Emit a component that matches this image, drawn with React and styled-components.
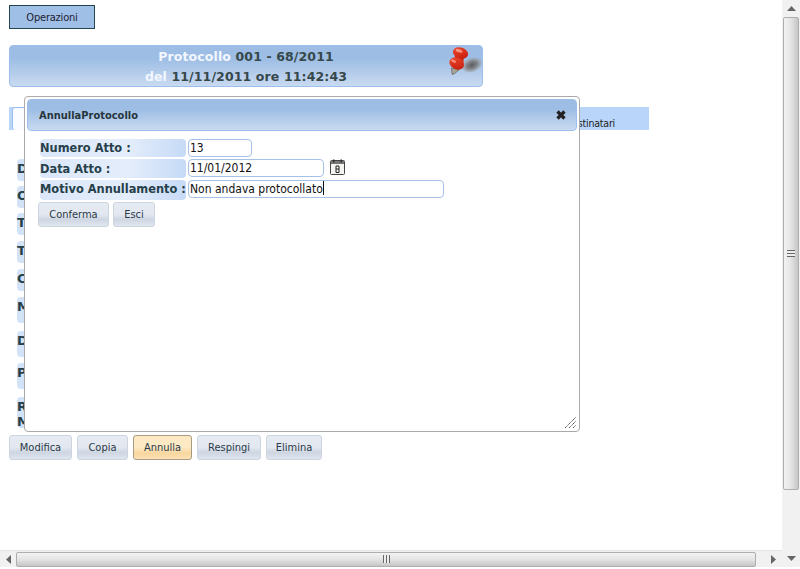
import React from 'react';
import styled, { createGlobalStyle } from 'styled-components';

const Global = createGlobalStyle`
  html, body { margin: 0; padding: 0; height: 100%; overflow: hidden; background: #fff; }
  #root { height: 569px; }
`;
const Shell = styled.div`
  width: 800px; height: 569px; display: grid;
  grid-template-columns: 782px 18px; grid-template-rows: 550px 17px 2px;
  font-family: "DejaVu Sans Condensed", "DejaVu Sans", sans-serif; font-size: 11px; color: #222;
`;
const Page = styled.main`
  position: relative; overflow: hidden; padding: 5px 0 0 9px; background: #fff;
  display: flex; flex-direction: column; align-items: flex-start;
`;
const OpsButton = styled.button`
  width: 86px; height: 24px; padding: 0; font: inherit; color: #223; letter-spacing: -0.2px;
  background: #a0bfe6; border: 1px solid #24464e; margin-bottom: 16px;
`;
const Banner = styled.header`
  position: relative; box-sizing: border-box; width: 474px; height: 42px; border: 1px solid #9cc0ec; border-radius: 4px;
  background: linear-gradient(#9dbde4 0%, #9dbde4 30%, #c9daf1 100%);
  font-family: "DejaVu Sans", sans-serif; font-weight: bold; font-size: 12.5px; letter-spacing: 0.12px; line-height: 20px; text-align: center;
  color: #36484a; padding-top: 1px; margin-bottom: 20px;
`;
const Light = styled.span` color: #f2f7ff; `;
const Pin = styled.svg` position: absolute; right: 0; top: 0; `;
const TabStrip = styled.nav`
  box-sizing: border-box; width: 640px; height: 23px; background: #b9d6fa; padding-left: 3px;
  display: flex; align-items: stretch; margin-bottom: 29px;
`;
const ActiveTab = styled.div`
  width: 60px; background: #fbfcff; border: 1px solid #9cc0ec; border-bottom: 0; border-radius: 3px 0 0 3px;
`;
const LastTab = styled.div` margin-left: auto; padding: 10px 34px 0 0; font-size: 10.5px; line-height: 12px; color: #222; letter-spacing: -0.2px; `;
const Fields = styled.div` display: flex; flex-direction: column; margin-left: 8px; `;
const SideLabel = styled.div`
  box-sizing: border-box; width: 100px; height: ${p => p.$h}px; margin-bottom: ${p => p.$gap}px;
  border-radius: 4px; padding-top: 2px; white-space: pre-line;
  background: linear-gradient(90deg, #d2e2f7, #e8f0fb);
  font: bold 13px/15px "DejaVu Sans", sans-serif; color: #26404a;
`;
const Actions = styled.div` display: flex; gap: 5px; margin-top: 7px; `;
const ActionBtn = styled.button`
  box-sizing: border-box; width: ${p => p.$w}px; height: 25px; padding: 0; font: inherit; font-size: 11px; color: #2a3a48;
  border-radius: 3px; border: 1px solid ${p => p.$active ? '#a89c84' : '#ccd5e0'};
  background: ${p => p.$active ? 'linear-gradient(#fde9c4 0%, #fde9c4 50%, #f8d69e 75%, #fce3b6 100%)' : 'linear-gradient(#e6ebf3 0%, #e2e7f0 50%, #ced6e2 72%, #e0e6ef 100%)'};
`;
const Dialog = styled.section`
  position: absolute; left: 24px; top: 96px; box-sizing: border-box; width: 556px; height: 336px;
  background: #fff; border: 1px solid #aaa; border-radius: 4px; padding: 2px;
`;
const TitleBar = styled.div`
  box-sizing: border-box; height: 32px; border: 1px solid #9cc0ec; border-radius: 4px; padding: 0 10px 0 11px;
  background: linear-gradient(#9dbde4 0%, #9dbde4 30%, #c9daf1 100%);
  display: flex; align-items: center; justify-content: space-between;
  font-size: 11px; font-weight: bold; color: #26363c;
`;
const FormGrid = styled.div`
  display: grid; grid-template-columns: 146px auto; grid-template-rows: 18px 19px 20px; column-gap: 2px; row-gap: 2px;
  justify-content: start; padding: 8px 0 0 13px;
`;
const FormLabel = styled.label`
  box-sizing: border-box; border-radius: 4px; white-space: nowrap;
  background: linear-gradient(90deg, #dbe7f9 0%, #e4edfb 60%, #c6daf6 100%);
  font: bold 11.4px/${p => p.$lh}px "DejaVu Sans", sans-serif; color: #26404a;
`;
const InputRow = styled.div` display: flex; align-items: flex-start; gap: 6px; `;
const TextBox = styled.div`
  box-sizing: border-box; width: ${p => p.$w}px; height: 18px; border: 1px solid #a5c1e6; border-radius: 4px;
  font-size: 12px; line-height: 16px; padding-left: 1px; color: #111; background: #fff; white-space: nowrap;
`;
const Caret = styled.span` display: inline-block; width: 1px; height: 14px; background: #111; vertical-align: -2px; `;
const DialogActions = styled.div` display: flex; gap: 4px; padding: 2px 0 0 11px; `;
const Grip = styled.svg` position: absolute; right: 2px; bottom: 2px; `;
const VBar = styled.aside`
  grid-row: 1 / 3; grid-column: 2; box-sizing: border-box; background: #f1f1f1; display: flex; flex-direction: column; align-items: center;
`;
const HBar = styled.aside`
  box-sizing: border-box; background: #f1f1f1; display: flex; align-items: center; border-top: 1px solid #e4e4e4;
`;
const Arrow = styled.div`
  flex: none; width: ${p => p.$size}px; height: ${p => p.$size}px; display: flex; align-items: center; justify-content: center;
`;
const Spacer = styled.div` flex: 1; `;
const VThumb = styled.div`
  box-sizing: border-box; width: 16px; height: 473px; margin-right: 1px; flex: none;
  border: 1px solid #aeaeae; border-radius: 2px; background: linear-gradient(90deg, #f2f2f2 0%, #e6e6e6 45%, #c6c6c6 100%);
  display: flex; align-items: center; justify-content: center;
`;
const HThumb = styled.div`
  box-sizing: border-box; width: 740px; height: 15px; flex: none;
  border: 1px solid #aeaeae; border-radius: 2px; background: linear-gradient(#f2f2f2 0%, #e6e6e6 45%, #c6c6c6 100%);
  display: flex; align-items: center; justify-content: center;
`;
const GripLinesV = styled.div` width: 8px; height: 7px; background: repeating-linear-gradient(#666 0 1px, #eee 1px 3px); `;
const GripLinesH = styled.div` width: 7px; height: 8px; background: repeating-linear-gradient(90deg, #666 0 1px, #eee 1px 3px); `;

const PinIcon = () => (
  <Pin width="38" height="34" viewBox="0 0 38 34">
    <defs>
      <radialGradient id="sh"><stop offset="0" stopColor="#5a5a5a" /><stop offset="0.55" stopColor="#7c7c7c" stopOpacity=".85" /><stop offset="1" stopColor="#a4a4a4" stopOpacity=".35" /></radialGradient>
      <linearGradient id="red" x1="0" y1="0" x2="1" y2="1"><stop offset="0" stopColor="#f0492f" /><stop offset="1" stopColor="#c21a0b" /></linearGradient>
    </defs>
    <ellipse cx="28" cy="19" rx="10.5" ry="7" transform="rotate(-22 28 19)" fill="url(#sh)" />
    <path d="M8 29 L9 24 L12 26 Z" fill="#555" />
    <path d="M7.5 22 L15 24 L10 28 L8 28 Z" fill="#a6a697" stroke="#555" strokeWidth=".6" />
    <path d="M11 10 L20 9 L19 21 L9 20 Z" fill="#d2260f" />
    <ellipse cx="12.8" cy="17.5" rx="7.6" ry="5.8" transform="rotate(25 12.8 17.5)" fill="url(#red)" />
    <ellipse cx="16.5" cy="7" rx="7.7" ry="5.6" transform="rotate(18 16.5 7)" fill="url(#red)" />
    <ellipse cx="15" cy="4.8" rx="3.6" ry="1.6" transform="rotate(18 15 4.8)" fill="#f7927e" />
    <ellipse cx="9.5" cy="15" rx="2.8" ry="1.4" transform="rotate(25 9.5 15)" fill="#f58a76" />
  </Pin>
);
const CalendarIcon = () => (
  <svg width="16" height="16" viewBox="0 0 16 16">
    <rect x="0.5" y="1.5" width="14" height="14" rx="1" fill="#f4f4f0" stroke="#444" />
    <rect x="1" y="2" width="13" height="3" fill="#777" />
    <rect x="3" y="0.5" width="1.5" height="3" fill="#333" /><rect x="10.5" y="0.5" width="1.5" height="3" fill="#333" />
    <path d="M6 7 H9 V13.5 H6 Z M6 10 H9" fill="none" stroke="#222" />
  </svg>
);
const CloseIcon = () => (
  <svg width="10" height="10" viewBox="0 0 10 10"><path d="M1.5 1.5 L8.5 8.5 M8.5 1.5 L1.5 8.5" stroke="#222" strokeWidth="3.2" /></svg>
);
const Tri = ({ d }) => (
  <svg width="9" height="9" viewBox="0 0 9 9"><path d={d} fill="#666" /></svg>
);

const side = [
  ['Data', 22, 5], ['Oggetto', 22, 5], ['Tipo', 22, 6], ['Tipologia', 22, 6], ['Classifica', 22, 6],
  ['Mittente', 26, 8], ['Destinatari', 26, 6], ['Pratica', 26, 8], ['Riferimento\nMittente', 31, 0],
];
const actions = [['Modifica', 63], ['Copia', 51], ['Annulla', 59, true], ['Respingi', 64], ['Elimina', 56]];

export default function App() {
  return (
    <Shell>
      <Global />
      <Page>
        <OpsButton>Operazioni</OpsButton>
        <Banner>
          <div><Light>Protocollo</Light> 001 - 68/2011</div>
          <div><Light>del</Light> 11/11/2011 ore 11:42:43</div>
          <PinIcon />
        </Banner>
        <TabStrip><ActiveTab /><LastTab>Destinatari</LastTab></TabStrip>
        <Fields>
          {side.map(([t, h, g]) => <SideLabel key={t} $h={h} $gap={g}>{t}</SideLabel>)}
        </Fields>
        <Actions>
          {actions.map(([t, w, a]) => <ActionBtn key={t} $w={w} $active={a}>{t}</ActionBtn>)}
        </Actions>
        <Dialog>
          <TitleBar>AnnullaProtocollo<CloseIcon /></TitleBar>
          <FormGrid>
            <FormLabel $lh={19}>Numero Atto :</FormLabel>
            <InputRow><TextBox $w={64}>13</TextBox></InputRow>
            <FormLabel $lh={20}>Data Atto :</FormLabel>
            <InputRow><TextBox $w={136}>11/01/2012</TextBox><CalendarIcon /></InputRow>
            <FormLabel $lh={18}>Motivo Annullamento :</FormLabel>
            <InputRow><TextBox $w={256}>Non andava protocollato<Caret /></TextBox></InputRow>
          </FormGrid>
          <DialogActions>
            <ActionBtn $w={71}>Conferma</ActionBtn>
            <ActionBtn $w={42}>Esci</ActionBtn>
          </DialogActions>
          <Grip width="13" height="13" viewBox="0 0 13 13">
            <path d="M1 12 L12 1 M5 12 L12 5 M9 12 L12 9" stroke="#555" strokeWidth="1" strokeDasharray="1.4 .5" />
          </Grip>
        </Dialog>
      </Page>
      <VBar>
        <Arrow $size={17}><Tri d="M4.5 2 L9 7 H0 Z" /></Arrow>
        <VThumb><GripLinesV /></VThumb>
        <Spacer />
        <Arrow $size={18}><Tri d="M0 2 H9 L4.5 7 Z" /></Arrow>
      </VBar>
      <HBar>
        <Arrow $size={16}><Tri d="M2 4.5 L7 0 V9 Z" /></Arrow>
        <HThumb><GripLinesH /></HThumb>
        <Spacer />
        <Arrow $size={18}><Tri d="M2 0 L7 4.5 L2 9 Z" /></Arrow>
      </HBar>
    </Shell>
  );
}
